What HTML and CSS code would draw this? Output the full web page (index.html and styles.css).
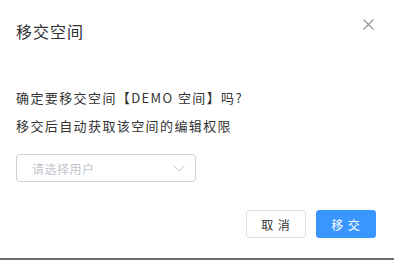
FILE: index.html
```html
<!DOCTYPE html>
<html lang="zh">
<head>
<meta charset="utf-8">
<link rel="stylesheet" href="styles.css">
</head>
<body>
<div class="dialog">
  <div class="header">
    <span class="title">移交空间</span>
    <button class="close" aria-label="close">
      <svg width="11" height="11" viewBox="0 0 11 11"><path d="M0.5 0.5L10.5 10.5M10.5 0.5L0.5 10.5" stroke="#909399" stroke-width="1.1" fill="none"/></svg>
    </button>
  </div>
  <div class="body">
    <p class="line">确定要移交空间【DEMO 空间】吗?</p>
    <p class="line">移交后自动获取该空间的编辑权限</p>
    <div class="select">
      <span class="placeholder">请选择用户</span>
      <svg class="chev" width="12" height="7" viewBox="0 0 12 7"><path d="M0.5 0.5L6 6L11.5 0.5" stroke="#c0c4cc" stroke-width="1" fill="none"/></svg>
    </div>
  </div>
  <div class="footer">
    <button class="btn">取 消</button>
    <button class="btn primary">移 交</button>
  </div>
</div>
<div class="bar"></div>
</body>
</html>
```
FILE: styles.css
```css
html, body {
  margin: 0;
  padding: 0;
  background: #fff;
}
body {
  font-family: "Noto Sans CJK SC", "Noto Sans", sans-serif;
  width: 394px;
  height: 260px;
  overflow: hidden;
}
.dialog {
  position: relative;
  height: 258px;
  box-sizing: border-box;
  display: flex;
  flex-direction: column;
}
.header {
  padding: 19px 16px 0 16px;
  height: 24px;
}
.title {
  font-size: 16px;
  line-height: 24px;
  letter-spacing: 1px;
  color: #303133;
}
.close {
  position: absolute;
  top: 19px;
  right: 20px;
  padding: 0;
  border: 0;
  background: none;
  width: 11px;
  height: 11px;
  display: flex;
}
.body {
  padding: 41px 16px 0 16px;
}
.line {
  margin: 0;
  font-size: 13px;
  line-height: 28px;
  letter-spacing: 1.4px;
  color: #333;
}
.select {
  margin-top: 14px;
  width: 180px;
  height: 28px;
  box-sizing: border-box;
  border: 1px solid #cfd2d8;
  border-radius: 4px;
  display: flex;
  align-items: center;
  justify-content: space-between;
  padding: 0 10px 0 15px;
}
.placeholder {
  font-size: 12px;
  color: #c0c4cc;
  letter-spacing: 0.5px;
}
.chev {
  display: block;
}
.footer {
  display: flex;
  justify-content: flex-end;
  gap: 10px;
  padding: 28px 18px 0 0;
}
.btn {
  width: 60px;
  height: 28px;
  box-sizing: border-box;
  border: 1px solid #dcdfe6;
  border-radius: 3px;
  background: #fff;
  color: #333;
  font-family: "Noto Sans CJK SC", "Noto Sans", sans-serif;
  font-size: 12px;
  letter-spacing: 1px;
  padding: 0;
}
.btn.primary {
  background: #3a96ff;
  border-color: #3a96ff;
  color: #fff;
}
.bar {
  height: 2px;
  background: #6b6b6b;
}
```
